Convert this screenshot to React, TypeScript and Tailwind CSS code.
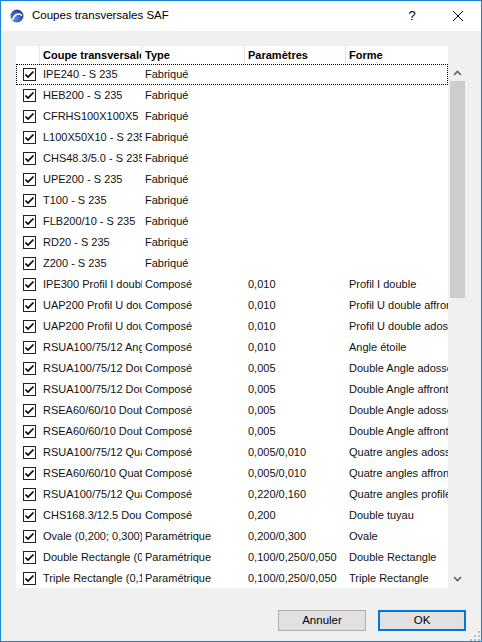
import React from 'react';

type Row = { name: string; type: string; params: string; shape: string };

const rows: Row[] = [
  { name: 'IPE240 - S 235', type: 'Fabriqué', params: '', shape: '' },
  { name: 'HEB200 - S 235', type: 'Fabriqué', params: '', shape: '' },
  { name: 'CFRHS100X100X5 - S 235', type: 'Fabriqué', params: '', shape: '' },
  { name: 'L100X50X10 - S 235', type: 'Fabriqué', params: '', shape: '' },
  { name: 'CHS48.3/5.0 - S 235', type: 'Fabriqué', params: '', shape: '' },
  { name: 'UPE200 - S 235', type: 'Fabriqué', params: '', shape: '' },
  { name: 'T100 - S 235', type: 'Fabriqué', params: '', shape: '' },
  { name: 'FLB200/10 - S 235', type: 'Fabriqué', params: '', shape: '' },
  { name: 'RD20 - S 235', type: 'Fabriqué', params: '', shape: '' },
  { name: 'Z200 - S 235', type: 'Fabriqué', params: '', shape: '' },
  { name: 'IPE300 Profil I double', type: 'Composé', params: '0,010', shape: 'Profil I double' },
  { name: 'UAP200 Profil U double affronté', type: 'Composé', params: '0,010', shape: 'Profil U double affronté' },
  { name: 'UAP200 Profil U double adossé', type: 'Composé', params: '0,010', shape: 'Profil U double adossé' },
  { name: 'RSUA100/75/12 Angle étoile', type: 'Composé', params: '0,010', shape: 'Angle étoile' },
  { name: 'RSUA100/75/12 Double Angle adossé', type: 'Composé', params: '0,005', shape: 'Double Angle adossé' },
  { name: 'RSUA100/75/12 Double Angle affronté', type: 'Composé', params: '0,005', shape: 'Double Angle affronté' },
  { name: 'RSEA60/60/10 Double Angle adossé', type: 'Composé', params: '0,005', shape: 'Double Angle adossé' },
  { name: 'RSEA60/60/10 Double Angle affronté', type: 'Composé', params: '0,005', shape: 'Double Angle affronté' },
  { name: 'RSUA100/75/12 Quatre angles adossés', type: 'Composé', params: '0,005/0,010', shape: 'Quatre angles adossés' },
  { name: 'RSEA60/60/10 Quatre angles affrontés', type: 'Composé', params: '0,005/0,010', shape: 'Quatre angles affrontés' },
  { name: 'RSUA100/75/12 Quatre angles profilés', type: 'Composé', params: '0,220/0,160', shape: 'Quatre angles profilés' },
  { name: 'CHS168.3/12.5 Double tuyau', type: 'Composé', params: '0,200', shape: 'Double tuyau' },
  { name: 'Ovale (0,200; 0,300)', type: 'Paramétrique', params: '0,200/0,300', shape: 'Ovale' },
  { name: 'Double Rectangle (0,100; 0,250; 0,050)', type: 'Paramétrique', params: '0,100/0,250/0,050', shape: 'Double Rectangle' },
  { name: 'Triple Rectangle (0,100; 0,250; 0,050)', type: 'Paramétrique', params: '0,100/0,250/0,050', shape: 'Triple Rectangle' },
];

const Checkbox = () => (
  <div className="w-[13px] h-[13px] border border-[#222] bg-white flex items-center justify-center">
    <svg width="11" height="11" viewBox="0 0 11 11">
      <path d="M1.5 5.5 L4 8 L9.5 2.5" fill="none" stroke="#000" strokeWidth="1.7" />
    </svg>
  </div>
);

const Logo = () => (
  <svg width="14" height="14" viewBox="0 0 14 14">
    <defs>
      <radialGradient id="lg" cx="35%" cy="70%" r="75%">
        <stop offset="0%" stopColor="#5b8fe0" />
        <stop offset="100%" stopColor="#1d3f9c" />
      </radialGradient>
    </defs>
    <circle cx="7" cy="7" r="6.5" fill="url(#lg)" />
    <path d="M2.5 11 C4 6 8 3 12 6.5" fill="none" stroke="#fff" strokeWidth="1.6" />
  </svg>
);

const App: React.FC = () => {
  return (
    <div
      className="w-[482px] h-[642px] border border-[#1883d7] bg-[#f0f0f0] flex flex-col text-[11px] text-[#111] overflow-hidden"
      style={{ fontFamily: '"Liberation Sans", Arial, sans-serif' }}
    >
      {/* Title bar */}
      <div className="h-[30px] bg-white flex items-center shrink-0">
        <div className="pl-[9px] pr-[8px] flex items-center"><Logo /></div>
        <div className="flex-1 text-[11.5px] text-black">Coupes transversales SAF</div>
        <div className="w-[46px] text-center text-[13px] text-black">?</div>
        <div className="w-[46px] flex items-center justify-center">
          <svg width="12" height="12" viewBox="0 0 12 12">
            <path d="M1 1 L11 11 M11 1 L1 11" stroke="#000" strokeWidth="1" />
          </svg>
        </div>
      </div>

      {/* List */}
      <div className="mt-[15px] ml-[15px] w-[450px] h-[542px] flex bg-white">
        <div className="w-[432px] flex flex-col">
          <div className="h-[18px] flex items-center font-bold text-black shrink-0">
            <div className="w-[24px] h-full border-r border-[#e5e5e5]" />
            <div className="w-[102px] h-full flex items-center pl-[3px] border-r border-[#e5e5e5] overflow-hidden whitespace-nowrap">Coupe transversale</div>
            <div className="w-[103px] h-full flex items-center pl-[3px] border-r border-[#e5e5e5] overflow-hidden whitespace-nowrap">Type</div>
            <div className="w-[101px] h-full flex items-center pl-[3px] border-r border-[#e5e5e5] overflow-hidden whitespace-nowrap">Paramètres</div>
            <div className="w-[102px] h-full flex items-center pl-[3px] overflow-hidden whitespace-nowrap">Forme</div>
          </div>
          {rows.map((r, i) => (
            <div
              key={i}
              className={`h-[21px] flex items-center shrink-0 ${i === 0 ? 'outline outline-1 outline-dotted outline-black -outline-offset-1' : ''}`}
            >
              <div className="w-[24px] pl-[7px] flex items-center"><Checkbox /></div>
              <div className="w-[102px] pl-[3px] overflow-hidden whitespace-nowrap">{r.name}</div>
              <div className="w-[103px] pl-[3px] overflow-hidden whitespace-nowrap">{r.type}</div>
              <div className="w-[101px] pl-[3px] overflow-hidden whitespace-nowrap">{r.params}</div>
              <div className="w-[102px] pl-[3px] overflow-hidden whitespace-nowrap">{r.shape}</div>
            </div>
          ))}
        </div>
        {/* Scrollbar */}
        <div className="w-[18px] bg-[#f0f0f0] flex flex-col items-center">
          <div className="h-[18px]" />
          <div className="h-[17px] flex items-center justify-center">
            <svg width="9" height="6" viewBox="0 0 9 6">
              <path d="M1 5 L4.5 1.5 L8 5" fill="none" stroke="#606060" strokeWidth="1.6" />
            </svg>
          </div>
          <div className="w-[15px] h-[217px] bg-[#cdcdcd]" />
          <div className="flex-1" />
          <div className="h-[17px] flex items-center justify-center mb-[1px]">
            <svg width="9" height="6" viewBox="0 0 9 6">
              <path d="M1 1 L4.5 4.5 L8 1" fill="none" stroke="#606060" strokeWidth="1.6" />
            </svg>
          </div>
        </div>
      </div>

      {/* Separator */}
      <div className="mt-[15px] ml-[15px] w-[450px] h-px bg-[#a0a0a0]" />

      {/* Buttons */}
      <div className="mt-[7px] flex justify-end gap-[12px] pr-[15px]">
        <button className="w-[88px] h-[21px] bg-[#e1e1e1] border border-[#adadad] text-[11.5px] text-black">Annuler</button>
        <button className="w-[88px] h-[21px] bg-[#e1e1e1] border-2 border-[#0078d7] text-[11.5px] text-black">OK</button>
      </div>

      {/* Size grip */}
      <div className="flex-1 flex items-end justify-end pr-[1px] pb-[1px]">
        <svg width="10" height="10" viewBox="0 0 10 10">
          <g fill="#bcbcbc">
            <rect x="8" y="0" width="2" height="2" />
            <rect x="4" y="4" width="2" height="2" />
            <rect x="8" y="4" width="2" height="2" />
            <rect x="0" y="8" width="2" height="2" />
            <rect x="4" y="8" width="2" height="2" />
            <rect x="8" y="8" width="2" height="2" />
          </g>
        </svg>
      </div>
    </div>
  );
};

export default App;
